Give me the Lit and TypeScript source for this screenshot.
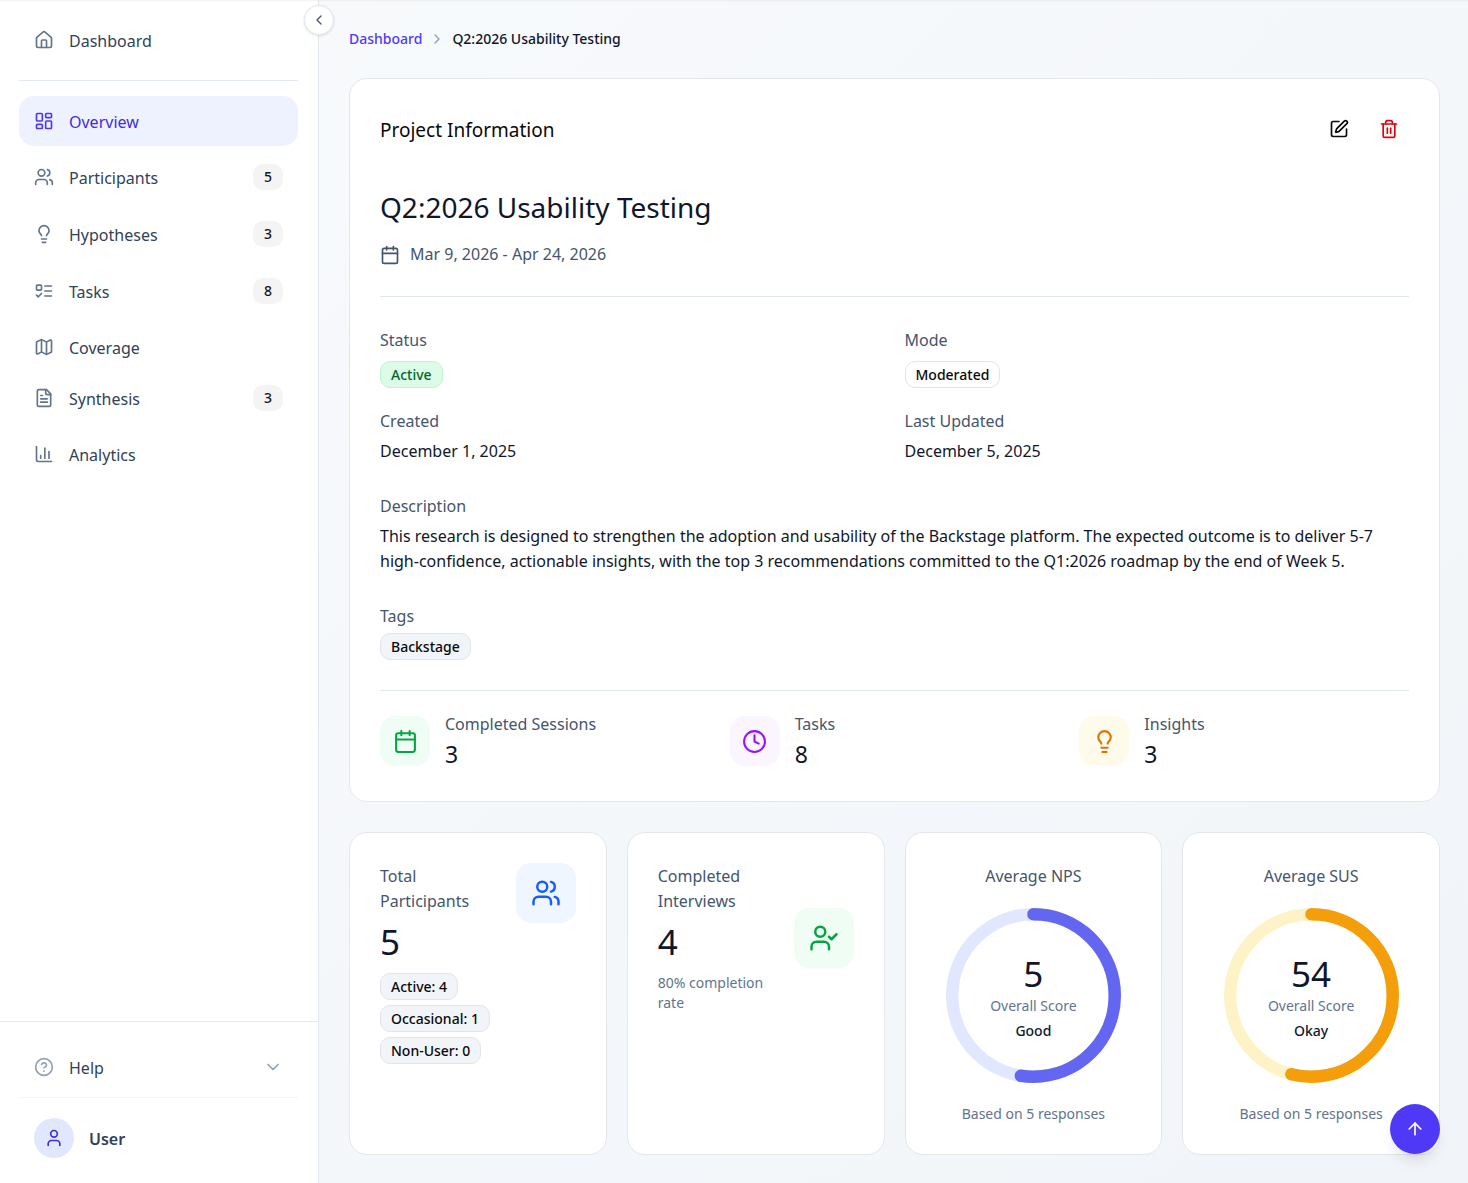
import { LitElement, html, css, svg, nothing } from 'lit';
import { customElement, property } from 'lit/decorators.js';
import { classMap } from 'lit/directives/class-map.js';

const ICONS = {
  house: svg`<path d="M15 21v-8a1 1 0 0 0-1-1h-4a1 1 0 0 0-1 1v8"/><path d="M3 10a2 2 0 0 1 .709-1.528l7-5.999a2 2 0 0 1 2.582 0l7 5.999A2 2 0 0 1 21 10v9a2 2 0 0 1-2 2H5a2 2 0 0 1-2-2z"/>`,
  grid: svg`<rect width="7" height="9" x="3" y="3" rx="1"/><rect width="7" height="5" x="14" y="3" rx="1"/><rect width="7" height="9" x="14" y="12" rx="1"/><rect width="7" height="5" x="3" y="16" rx="1"/>`,
  users: svg`<path d="M16 21v-2a4 4 0 0 0-4-4H6a4 4 0 0 0-4 4v2"/><circle cx="9" cy="7" r="4"/><path d="M22 21v-2a4 4 0 0 0-3-3.87"/><path d="M16 3.13a4 4 0 0 1 0 7.75"/>`,
  userCheck: svg`<path d="m16 11 2 2 4-4"/><path d="M16 21v-2a4 4 0 0 0-4-4H6a4 4 0 0 0-4 4v2"/><circle cx="9" cy="7" r="4"/>`,
  user: svg`<path d="M19 21v-2a4 4 0 0 0-4-4H9a4 4 0 0 0-4 4v2"/><circle cx="12" cy="7" r="4"/>`,
  bulb: svg`<path d="M15 14c.2-1 .7-1.7 1.5-2.5 1-.9 1.5-2.2 1.5-3.5A6 6 0 0 0 6 8c0 1 .2 2.2 1.5 3.5.7.7 1.3 1.5 1.5 2.5"/><path d="M9 18h6"/><path d="M10 22h4"/>`,
  tasks: svg`<rect x="3" y="5" width="6" height="6" rx="1"/><path d="m3 17 2 2 4-4"/><path d="M13 6h8"/><path d="M13 12h8"/><path d="M13 18h8"/>`,
  map: svg`<path d="M14.106 5.553a2 2 0 0 0 1.788 0l3.659-1.83A1 1 0 0 1 21 4.619v12.764a1 1 0 0 1-.553.894l-4.553 2.277a2 2 0 0 1-1.788 0l-4.212-2.106a2 2 0 0 0-1.788 0l-3.659 1.83A1 1 0 0 1 3 19.381V6.618a1 1 0 0 1 .553-.894l4.553-2.277a2 2 0 0 1 1.788 0z"/><path d="M15 5.764v15"/><path d="M9 3.236v15"/>`,
  file: svg`<path d="M15 2H6a2 2 0 0 0-2 2v16a2 2 0 0 0 2 2h12a2 2 0 0 0 2-2V7Z"/><path d="M14 2v4a2 2 0 0 0 2 2h4"/><path d="M10 9H8"/><path d="M16 13H8"/><path d="M16 17H8"/>`,
  chart: svg`<path d="M3 3v16a2 2 0 0 0 2 2h16"/><path d="M18 17V9"/><path d="M13 17V5"/><path d="M8 17v-3"/>`,
  help: svg`<circle cx="12" cy="12" r="10"/><path d="M9.09 9a3 3 0 0 1 5.83 1c0 2-3 3-3 3"/><path d="M12 17h.01"/>`,
  calendar: svg`<path d="M8 2v4"/><path d="M16 2v4"/><rect width="18" height="18" x="3" y="4" rx="2"/><path d="M3 10h18"/>`,
  clock: svg`<circle cx="12" cy="12" r="10"/><path d="M12 6v6l4 2"/>`,
  edit: svg`<path d="M12 3H5a2 2 0 0 0-2 2v14a2 2 0 0 0 2 2h14a2 2 0 0 0 2-2v-7"/><path d="M18.375 2.625a1 1 0 0 1 3 3l-9.013 9.014a2 2 0 0 1-.853.505l-2.873.84a.5.5 0 0 1-.62-.62l.84-2.873a2 2 0 0 1 .506-.852z"/>`,
  trash: svg`<path d="M3 6h18"/><path d="M19 6v14c0 1-1 2-2 2H7c-1 0-2-1-2-2V6"/><path d="M8 6V4c0-1 1-2 2-2h4c1 0 2 1 2 2v2"/><path d="M10 11v6"/><path d="M14 11v6"/>`,
  left: svg`<path d="m15 18-6-6 6-6"/>`,
  right: svg`<path d="m9 18 6-6-6-6"/>`,
  down: svg`<path d="m6 9 6 6 6-6"/>`,
  up: svg`<path d="m5 12 7-7 7 7"/><path d="M12 19V5"/>`,
};
type IconName = keyof typeof ICONS;

const icon = (name: IconName, size = 20) => html`
  <svg class="icon" width=${size} height=${size} viewBox="0 0 24 24" fill="none" stroke="currentColor"
    stroke-width="2" stroke-linecap="round" stroke-linejoin="round" aria-hidden="true">${ICONS[name]}</svg>`;

const base = css`
  * { box-sizing: border-box; }
  h1, h2, p, ul, ol, dl, dd { margin: 0; padding: 0; }
  ul, ol { list-style: none; }
  a { color: inherit; text-decoration: none; }
  button {
    border: 0;
    padding: 0;
    background: none;
    font: inherit;
    color: inherit;
    cursor: pointer;
  }
  .icon { display: block; flex: none; }
`;

const card = css`
  .card {
    background: #fff;
    border: 1px solid #e4e6ea;
    border-radius: 18px;
    padding: 30px;
  }
`;

const badges = css`
  .badge {
    display: block;
    width: fit-content;
    padding: 2px 10px;
    border: 1px solid #e2e4e9;
    border-radius: 10px;
    font-size: 14px;
    line-height: 21px;
    font-weight: 500;
    color: #0a0a0a;
    background: #f1f5f9;
    white-space: nowrap;
  }
  .badge.active { background: #dcfce7; border-color: #b9f8cf; color: #016630; }
  .badge.outline { background: #fff; }
`;

interface NavItem { label: string; icon: IconName; count?: number; active?: boolean }

const STUDY_NAV: NavItem[] = [
  { label: 'Overview', icon: 'grid', active: true },
  { label: 'Participants', icon: 'users', count: 5 },
  { label: 'Hypotheses', icon: 'bulb', count: 3 },
  { label: 'Tasks', icon: 'tasks', count: 8 },
  { label: 'Coverage', icon: 'map' },
];
const RESULT_NAV: NavItem[] = [
  { label: 'Synthesis', icon: 'file', count: 3 },
  { label: 'Analytics', icon: 'chart' },
];

@customElement('side-nav')
class SideNav extends LitElement {
  static styles = [base, css`
    :host {
      display: flex;
      flex-direction: column;
      position: sticky;
      top: 0;
      width: 319px;
      height: 100vh;
      flex: none;
      background: #fff;
      border-right: 1px solid #e2e8f0;
      box-sizing: border-box;
      z-index: 1;
    }
    .top { flex: 1; padding: 15px 20px 0 19px; }
    .home { padding-bottom: 15px; margin-bottom: 15px; border-bottom: 1px solid #e2e8f0; }
    .group { display: grid; gap: 5px; }
    .item {
      display: flex;
      align-items: center;
      gap: 15px;
      width: 100%;
      min-height: 50px;
      padding: 0 15px;
      border-radius: 15px;
      line-height: 26px;
      color: #314158;
      text-align: left;
    }
    .item .icon { color: #62748e; }
    .item.counted { min-height: 52px; }
    .item.active { background: #eef2ff; color: #432dd7; }
    .item.active .icon { color: #4f39f6; }
    .label { flex: 1; padding-top: 2px; text-align: left; }
    .count {
      width: 30px;
      border-radius: 10px;
      background: #f4f4f5;
      color: #18181b;
      font-size: 14px;
      font-weight: 500;
      text-align: center;
    }
    .toggle {
      position: absolute;
      top: 5px;
      right: -16px;
      display: grid;
      place-items: center;
      width: 30px;
      height: 30px;
      border: 1px solid #e2e8f0;
      border-radius: 50%;
      background: #fff;
      color: #45556c;
      box-shadow: 0 1px 3px rgb(0 0 0 / 0.12);
    }
    .bottom { border-top: 1px solid #e2e8f0; padding: 20px 20px 25px 19px; }
    .help .item .icon { color: #90a1b9; }
    .help { padding-bottom: 5px; border-bottom: 1px solid #f1f5f9; }
    .user {
      display: flex;
      align-items: center;
      gap: 15px;
      padding: 20px 15px 0;
      width: 100%;
      color: #314158;
      font-weight: 600;
    }
    .avatar {
      display: grid;
      place-items: center;
      width: 40px;
      height: 40px;
      border-radius: 50%;
      background: #e0e7ff;
      color: #432dd7;
    }
  `];

  private item(i: NavItem) {
    const cls = { item: true, active: !!i.active, counted: i.count !== undefined };
    return html`<li><a class=${classMap(cls)} href="#" aria-current=${i.active ? 'page' : nothing}>
      ${icon(i.icon)}<span class="label">${i.label}</span>
      ${i.count === undefined ? nothing : html`<span class="count">${i.count}</span>`}
    </a></li>`;
  }

  render() {
    return html`
      <nav class="top">
        <div class="home"><a class="item" href="#">${icon('house')}<span class="label">Dashboard</span></a></div>
        <ul class="group">${STUDY_NAV.map((i) => this.item(i))}</ul>
        <ul class="group">${RESULT_NAV.map((i) => this.item(i))}</ul>
      </nav>
      <div class="bottom">
        <div class="help"><button class="item" type="button">${icon('help')}<span class="label">Help</span>${icon('down')}</button></div>
        <button class="user" type="button"><span class="avatar">${icon('user')}</span><span class="label">User</span></button>
      </div>
      <button class="toggle" type="button" aria-label="Collapse sidebar">${icon('left', 16)}</button>
    `;
  }
}

@customElement('project-card')
class ProjectCard extends LitElement {
  static styles = [base, card, badges, css`
    :host { display: block; }
    .head { display: flex; align-items: center; justify-content: space-between; margin-bottom: 39px; }
    h2 { padding-top: 2px; font-size: 19px; font-weight: 400; color: #0a0a0a; }
    .actions { display: flex; gap: 10px; }
    .action { display: grid; place-items: center; width: 40px; height: 40px; color: #0a0a0a; }
    .action.danger { color: #e7000b; }
    h1 { font-size: 28px; line-height: 38px; font-weight: 400; color: #0f172b; }
    .dates { display: flex; align-items: center; gap: 10px; margin-top: 16px; line-height: 25px; color: #45556c; }
    .facts {
      display: grid;
      grid-template-columns: 1fr 1fr;
      gap: 21px 20px;
      margin-top: 29px;
      padding: 31px 0 30px;
      border-top: 1px solid #e2e8f0;
    }
    dt { line-height: 25px; color: #45556c; }
    dd { margin-top: 5px; line-height: 25px; color: #0f172b; }
    dd.chip { margin-top: 8px; }
    .text { margin-bottom: 30px; }
    .text .chip { margin-top: 4px; }
    .stats {
      display: grid;
      grid-template-columns: repeat(3, 1fr);
      gap: 20px;
      padding-top: 20px;
      border-top: 1px solid #e2e8f0;
    }
    .stat { display: flex; align-items: center; gap: 15px; min-height: 60px; }
    .tile { display: grid; place-items: center; width: 50px; height: 50px; border-radius: 15px; }
    .green { background: #f0fdf4; color: #00a63e; }
    .purple { background: #faf5ff; color: #9810fa; }
    .amber { background: #fffbeb; color: #e17100; }
    .stat-label { line-height: 25px; color: #45556c; }
    .stat-value { font-size: 23px; line-height: 34px; color: #0f172b; }
  `];

  private stat(name: IconName, tone: string, label: string, value: number) {
    return html`<div class="stat"><span class="tile ${tone}">${icon(name, 25)}</span>
      <div><p class="stat-label">${label}</p><p class="stat-value">${value}</p></div></div>`;
  }

  render() {
    return html`<section class="card">
      <div class="head">
        <h2>Project Information</h2>
        <div class="actions">
          <button class="action" type="button" aria-label="Edit project">${icon('edit')}</button>
          <button class="action danger" type="button" aria-label="Delete project">${icon('trash')}</button>
        </div>
      </div>
      <h1>Q2:2026 Usability Testing</h1>
      <p class="dates">${icon('calendar')}<span>Mar 9, 2026 - Apr 24, 2026</span></p>
      <dl class="facts">
        <div><dt>Status</dt><dd class="chip"><span class="badge active">Active</span></dd></div>
        <div><dt>Mode</dt><dd class="chip"><span class="badge outline">Moderated</span></dd></div>
        <div><dt>Created</dt><dd>December 1, 2025</dd></div>
        <div><dt>Last Updated</dt><dd>December 5, 2025</dd></div>
      </dl>
      <dl>
        <div class="text"><dt>Description</dt><dd>This research is designed to strengthen the adoption and usability of the Backstage platform. The expected outcome is to deliver 5-7 high-confidence, actionable insights, with the top 3 recommendations committed to the Q1:2026 roadmap by the end of Week 5.</dd></div>
        <div class="text"><dt>Tags</dt><dd class="chip"><span class="badge">Backstage</span></dd></div>
      </dl>
      <div class="stats">
        ${this.stat('calendar', 'green', 'Completed Sessions', 3)}
        ${this.stat('clock', 'purple', 'Tasks', 8)}
        ${this.stat('bulb', 'amber', 'Insights', 3)}
      </div>
    </section>`;
  }
}

@customElement('count-card')
class CountCard extends LitElement {
  @property() label = '';
  @property({ type: Number }) value = 0;
  @property() icon: IconName = 'users';
  @property() note = '';
  @property({ attribute: false }) tags: string[] = [];

  static styles = [base, card, badges, css`
    :host { display: grid; }
    .row { display: flex; align-items: center; gap: 15px; }
    .row.tagged { align-items: flex-start; }
    .body { flex: 1; min-width: 0; }
    .label { padding-top: 1px; line-height: 25px; color: #45556c; }
    .value { margin: 5px 0 9px; font-size: 35px; line-height: 45px; color: #0f172b; }
    .note { font-size: 14px; line-height: 20px; color: #62748e; }
    .tags { display: grid; gap: 5px; }
    .tile { display: grid; place-items: center; width: 60px; height: 60px; border-radius: 15px; background: #f0fdf4; color: #00a63e; }
    .tagged .tile { background: #eff6ff; color: #155dfc; }
  `];

  render() {
    return html`<section class="card">
      <div class=${classMap({ row: true, tagged: this.tags.length > 0 })}>
        <div class="body">
          <p class="label">${this.label}</p>
          <p class="value">${this.value}</p>
          ${this.tags.length
            ? html`<div class="tags">${this.tags.map((t) => html`<span class="badge">${t}</span>`)}</div>`
            : html`<p class="note">${this.note}</p>`}
        </div>
        <span class="tile">${icon(this.icon, 30)}</span>
      </div>
    </section>`;
  }
}

@customElement('score-card')
class ScoreCard extends LitElement {
  @property() label = '';
  @property({ type: Number }) value = 0;
  @property({ type: Number }) fraction = 0;
  @property() rating = '';
  @property() tone = 'indigo';

  static styles = [base, card, css`
    :host { display: grid; }
    .card { display: flex; flex-direction: column; align-items: center; text-align: center; }
    .label { padding-top: 1px; line-height: 25px; color: #45556c; }
    .gauge { display: grid; place-items: center; margin: 19px 0 21px; }
    .ring, .reading { grid-area: 1 / 1; }
    .ring { display: block; width: 175px; height: 175px; }
    .track, .arc { fill: none; stroke-width: 10; }
    .arc { stroke-linecap: round; }
    .indigo .track { stroke: #e0e7ff; }
    .indigo .arc { stroke: #6366f1; }
    .amber .track { stroke: #fef3c7; }
    .amber .arc { stroke: #f59e0b; }
    .value { font-size: 35px; line-height: 45px; color: #0f172b; }
    .note { font-size: 14px; line-height: 20px; color: #62748e; }
    .rating { margin-top: 5px; font-size: 14px; line-height: 20px; font-weight: 500; color: #0f172b; }
  `];

  render() {
    return html`<section class="card">
      <p class="label">${this.label}</p>
      <div class="gauge ${this.tone}">
        <svg class="ring" viewBox="0 0 140 140" aria-hidden="true">
          <circle class="track" cx="70" cy="70" r="65"/>
          <circle class="arc" cx="70" cy="70" r="65" transform="rotate(-90 70 70)" pathLength="100"
            stroke-dasharray="${this.fraction * 100} 100"/>
        </svg>
        <div class="reading">
          <p class="value">${this.value}</p>
          <p class="note">Overall Score</p>
          <p class="rating">${this.rating}</p>
        </div>
      </div>
      <p class="note">Based on 5 responses</p>
    </section>`;
  }
}

@customElement('app-root')
class AppRoot extends LitElement {
  static styles = [base, css`
    :host {
      display: flex;
      position: relative;
      min-height: 100vh;
      font-family: "Noto Sans", "Open Sans", sans-serif;
      font-size: 16px;
      line-height: 25px;
      background: linear-gradient(135deg, #f8fafc, #f1f5f9);
    }
    .edge {
      position: absolute;
      inset: 0 0 auto;
      height: 2px;
      background: linear-gradient(rgb(0 0 0 / 0.05), transparent);
      z-index: 2;
    }
    main { flex: 1; min-width: 0; padding: 29px 28px 29px 30px; }
    .crumbs {
      display: flex;
      align-items: center;
      gap: 7px;
      margin-bottom: 29px;
      font-size: 14px;
      line-height: 20px;
      font-weight: 500;
      color: #0f172b;
    }
    .crumb { display: flex; align-items: center; gap: 7px; }
    .crumb .icon { color: #90a1b9; }
    .crumb a { color: #4f39f6; }
    .metrics {
      display: grid;
      grid-template-columns: repeat(4, minmax(0, 1fr));
      gap: 20px;
      margin-top: 30px;
    }
    .to-top {
      position: fixed;
      right: 28px;
      bottom: 29px;
      display: grid;
      place-items: center;
      width: 50px;
      height: 50px;
      border-radius: 50%;
      background: #4f39f6;
      color: #fff;
      box-shadow: 0 10px 15px -3px rgb(0 0 0 / 0.1), 0 4px 6px -4px rgb(0 0 0 / 0.1);
    }
  `];

  render() {
    return html`
      <div class="edge"></div>
      <side-nav></side-nav>
      <main>
        <nav aria-label="Breadcrumb">
          <ol class="crumbs">
            <li class="crumb"><a href="#">Dashboard</a>${icon('right', 16)}</li>
            <li aria-current="page">Q2:2026 Usability Testing</li>
          </ol>
        </nav>
        <project-card></project-card>
        <div class="metrics">
          <count-card label="Total Participants" value="5" icon="users"
            .tags=${['Active: 4', 'Occasional: 1', 'Non-User: 0']}></count-card>
          <count-card label="Completed Interviews" value="4" icon="userCheck" note="80% completion rate"></count-card>
          <score-card label="Average NPS" value="5" fraction="0.525" rating="Good" tone="indigo"></score-card>
          <score-card label="Average SUS" value="54" fraction="0.54" rating="Okay" tone="amber"></score-card>
        </div>
      </main>
      <button class="to-top" type="button" aria-label="Back to top">${icon('up')}</button>
    `;
  }
}
